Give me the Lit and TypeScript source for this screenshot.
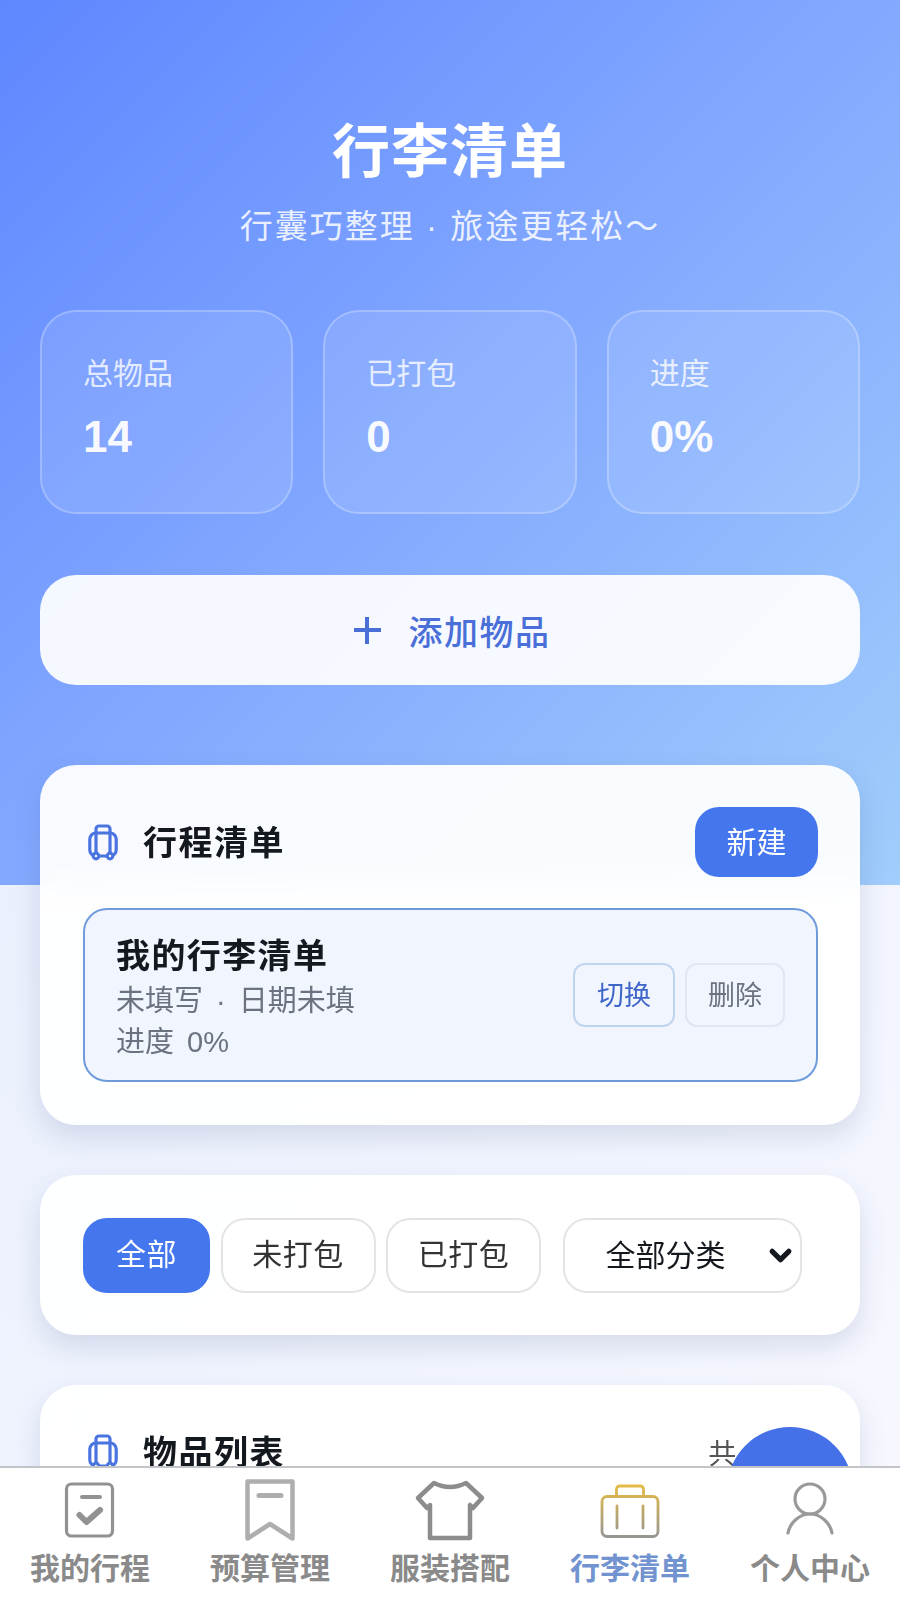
import { LitElement, css, html, svg } from 'lit';
import { customElement } from 'lit/decorators.js';

const suitcaseIcon = html`<svg class="case" viewBox="0 0 30 37" fill="none" stroke="#4a74e0" stroke-width="3.200" stroke-linejoin="round">
  <rect x="1.800" y="9" width="26.400" height="23" rx="6"></rect>
  <path d="M8 9V5a3 3 0 0 1 3-3h8a3 3 0 0 1 3 3v4M8 9v21M22 9v21"></path>
  <circle cx="8" cy="32" r="2.800" fill="#fff"></circle>
  <circle cx="22" cy="32" r="2.800" fill="#fff"></circle>
</svg>`;

const navItems = [
  {
    label: '我的行程',
    icon: svg`<svg class="nav-icon" viewBox="0 0 60 64" fill="none" stroke="#929292" stroke-width="3.200" stroke-linejoin="round">
      <rect x="6.500" y="5" width="46" height="52" rx="5"></rect>
      <path d="M22 18h18" stroke-width="4" stroke-linecap="round"></path>
      <path d="M19.500 36l7 7 13.500-12" stroke-width="6" stroke-linecap="round"></path>
    </svg>`,
  },
  {
    label: '预算管理',
    icon: svg`<svg class="nav-icon" viewBox="0 0 60 64" fill="none" stroke="#aeaeae" stroke-width="4.500" stroke-linejoin="round">
      <path d="M7.500 2.500h45v57L30 45 7.500 59.500z"></path>
      <path d="M19 16.500h22" stroke-width="5" stroke-linecap="round"></path>
    </svg>`,
  },
  {
    label: '服装搭配',
    icon: svg`<svg class="nav-icon" viewBox="0 0 72 64" fill="none" stroke="#8c8c8c" stroke-width="4.500" stroke-linejoin="round">
      <path d="M20 4Q36 12 52 4L68 19 59 29 56 26V59H16V26L13 29 4 19Z"></path>
    </svg>`,
  },
  {
    label: '行李清单',
    active: true,
    icon: svg`<svg class="nav-icon" viewBox="0 0 62 64" fill="none" stroke="url(#caseFade)" stroke-width="2.800" stroke-linejoin="round">
      <defs>
        <linearGradient id="caseFade" gradientUnits="userSpaceOnUse" x1="0" y1="6" x2="0" y2="60">
          <stop offset="0" stop-color="#e6bb45"></stop>
          <stop offset="1" stop-color="#949494"></stop>
        </linearGradient>
      </defs>
      <rect x="3" y="17.500" width="56" height="40" rx="5"></rect>
      <path d="M17.500 17.500V10a3 3 0 0 1 3-3h21a3 3 0 0 1 3 3v7.500M18 27v22M44 27v22" stroke-linecap="round"></path>
    </svg>`,
  },
  {
    label: '个人中心',
    icon: svg`<svg class="nav-icon" viewBox="0 0 60 64" fill="none" stroke="#999" stroke-width="3.200" stroke-linecap="round">
      <circle cx="30" cy="20" r="15"></circle>
      <path d="M8 54c2-10 11-19 22-19s20 9 22 19"></path>
    </svg>`,
  },
];

@customElement('app-root')
export class AppRoot extends LitElement {
  render() {
    return html`
      <div class="hero">
        <h1>行李清单</h1>
        <p class="sub">行囊巧整理 · 旅途更轻松～</p>
        <div class="stats">
          ${[['总物品', '14'], ['已打包', '0'], ['进度', '0%']].map(
            ([label, value]) => html`<div class="stat">
              <div class="stat-label">${label}</div>
              <div class="stat-value">${value}</div>
            </div>`,
          )}
        </div>
        <button class="add"><span class="plus"></span>添加物品</button>
      </div>

      <div class="content">
        <section class="card trips">
          <div class="card-head">
            ${suitcaseIcon}
            <h2>行程清单</h2>
            <button class="new">新建</button>
          </div>
          <div class="trip">
            <div class="trip-info">
              <div class="trip-name">我的行李清单</div>
              <div class="trip-meta">未填写 · 日期未填</div>
              <div class="trip-meta">进度 0%</div>
            </div>
            <button class="mini switch">切换</button>
            <button class="mini remove">删除</button>
          </div>
        </section>

        <section class="card filters">
          <button class="pill on">全部</button>
          <button class="pill">未打包</button>
          <button class="pill">已打包</button>
          <div class="select">
            <span>全部分类</span>
            <svg viewBox="0 0 24 16" fill="none" stroke="#14181f" stroke-width="5" stroke-linecap="round" stroke-linejoin="round">
              <path d="M4 4l8 8 8-8"></path>
            </svg>
          </div>
        </section>

        <section class="card items">
          <div class="card-head">
            ${suitcaseIcon}
            <h2>物品列表</h2>
            <span class="count">共 14 件</span>
          </div>
        </section>
      </div>

      <div class="fab"></div>

      <nav>
        ${navItems.map(
          (item) => html`<div class="nav-item ${item.active ? 'active' : ''}">
            ${item.icon}
            <span>${item.label}</span>
          </div>`,
        )}
      </nav>
    `;
  }

  static styles = css`
    :host {
      display: block;
      position: relative;
      height: 1600px;
      overflow: hidden;
      background: linear-gradient(135deg, #e9effd 30%, #f8f9ff 100%);
      font-family: "Liberation Sans", "Noto Sans CJK SC", sans-serif;
      color: #14181f;
    }
    * { box-sizing: border-box; }
    button {
      font: inherit;
      border: 0;
      padding: 0;
    }

    .hero {
      height: 885px;
      padding: 113px 40px 0;
      background: linear-gradient(135deg, #5f87ff 0%, #83a9ff 50%, #a0cdfb 100%);
      text-align: center;
      color: #fff;
    }
    h1 {
      margin: 0;
      height: 78px;
      font-size: 58px;
      line-height: 78px;
      font-weight: 700;
      letter-spacing: 1px;
    }
    .sub {
      margin: 14px 0 0;
      height: 44px;
      font-size: 33px;
      line-height: 44px;
      letter-spacing: 2px;
      color: rgba(255, 255, 255, 0.85);
    }
    .stats {
      display: flex;
      gap: 30px;
      margin-top: 61px;
      text-align: left;
    }
    .stat {
      flex: 1;
      height: 204px;
      padding: 42px 41px 0;
      border-radius: 36px;
      background: rgba(255, 255, 255, 0.1);
      border: 2px solid rgba(255, 255, 255, 0.24);
    }
    .stat-label {
      font-size: 30px;
      line-height: 40px;
      color: rgba(255, 255, 255, 0.8);
    }
    .stat-value {
      margin-top: 18px;
      font-size: 44px;
      line-height: 50px;
      font-weight: 700;
      color: rgba(255, 255, 255, 0.95);
    }
    .add {
      display: flex;
      align-items: center;
      justify-content: center;
      gap: 28px;
      width: 100%;
      height: 110px;
      margin-top: 61px;
      padding-left: 4px;
      border-radius: 36px;
      background: rgba(255, 255, 255, 0.92);
      color: #4a6fd8;
      font-size: 34px;
      font-weight: 500;
      letter-spacing: 1.500px;
    }
    .plus {
      width: 27px;
      height: 27px;
      background:
        linear-gradient(#4a6fd8, #4a6fd8) center / 100% 4px no-repeat,
        linear-gradient(#4a6fd8, #4a6fd8) center / 4px 100% no-repeat;
    }

    .content {
      display: flex;
      flex-direction: column;
      gap: 50px;
      margin-top: -120px;
      padding: 0 40px;
    }
    .card {
      border-radius: 36px;
      background: rgba(255, 255, 255, 0.94);
      backdrop-filter: blur(12px);
      box-shadow: 0 12px 28px rgba(60, 80, 130, 0.16);
      padding: 42px 42px 42px 43px;
    }
    .trips { height: 360px; }
    .card-head {
      display: flex;
      align-items: center;
      height: 70px;
    }
    .case {
      width: 30px;
      height: 37px;
      margin: 0 25px 0 5px;
      flex: none;
    }
    h2 {
      flex: 1;
      margin: 2px 0 0;
      font-size: 34px;
      line-height: 46px;
      font-weight: 700;
      letter-spacing: 1.500px;
    }
    .new {
      width: 123px;
      height: 70px;
      padding-bottom: 4px;
      border-radius: 24px;
      background: #4476ee;
      color: #fff;
      font-size: 30px;
    }
    .trip {
      display: flex;
      align-items: center;
      gap: 10px;
      height: 174px;
      margin-top: 31px;
      padding: 0 31px 0 31px;
      border: 2px solid #6f9bdc;
      border-radius: 24px;
      background: #f1f5fe;
    }
    .trip-info {
      flex: 1;
      padding-top: 4px;
    }
    .trip-name {
      margin-bottom: 1px;
      font-size: 34px;
      line-height: 48px;
      font-weight: 700;
      letter-spacing: 1.400px;
    }
    .trip-meta {
      font-size: 29px;
      line-height: 41px;
      word-spacing: 5px;
      color: #6b7280;
    }
    .mini {
      width: 100px;
      height: 64px;
      padding-bottom: 4px;
      border-radius: 12px;
      font-size: 27px;
      background: #f1f5fd;
    }
    .switch {
      width: 102px;
      border: 2px solid #c0d4ef;
      color: #3f66c9;
    }
    .remove {
      border: 2px solid #e1e6ef;
      color: #6b7280;
    }

    .filters {
      display: flex;
      align-items: center;
      height: 160px;
      gap: 10.500px;
    }
    .pill {
      height: 75px;
      padding: 0 0 6px;
      width: 155px;
      border: 2px solid #e4e4e4;
      border-radius: 24px;
      background: #fff;
      color: #333;
      font-size: 30px;
      letter-spacing: 0.500px;
    }
    .pill.on {
      width: 127px;
      border-color: #4476ee;
      background: #4476ee;
      color: #fff;
    }
    .select {
      display: flex;
      align-items: center;
      justify-content: space-between;
      width: 239px;
      height: 75px;
      margin-left: 11px;
      padding: 0 7px 4px 41px;
      border: 2px solid #e4e4e4;
      border-radius: 24px;
      background: #fff;
      font-size: 30px;
    }
    .select svg {
      width: 25px;
      height: 17px;
      margin-top: 4px;
    }

    .items { height: 300px; }
    .items .card-head { height: 50px; }
    .count {
      margin-right: 7px;
      font-size: 28px;
      color: #555;
    }

    .fab {
      position: absolute;
      left: 727px;
      top: 1427px;
      width: 126px;
      height: 126px;
      border-radius: 50%;
      background: #4570e8;
    }

    nav {
      position: absolute;
      left: 0;
      right: 0;
      bottom: 0;
      display: grid;
      grid-template-columns: repeat(5, 1fr);
      height: 134px;
      background: #fff;
      border-top: 2px solid #c2c4c8;
    }
    .nav-item {
      display: flex;
      flex-direction: column;
      align-items: center;
      padding-top: 11px;
      color: #8a8a8a;
      font-size: 30px;
      line-height: 42px;
      font-weight: 700;
    }
    .nav-item.active { color: #7193cf; }
    .nav-icon {
      height: 64px;
      margin-bottom: 5px;
    }
  `;
}

declare global {
  interface HTMLElementTagNameMap {
    'app-root': AppRoot;
  }
}
